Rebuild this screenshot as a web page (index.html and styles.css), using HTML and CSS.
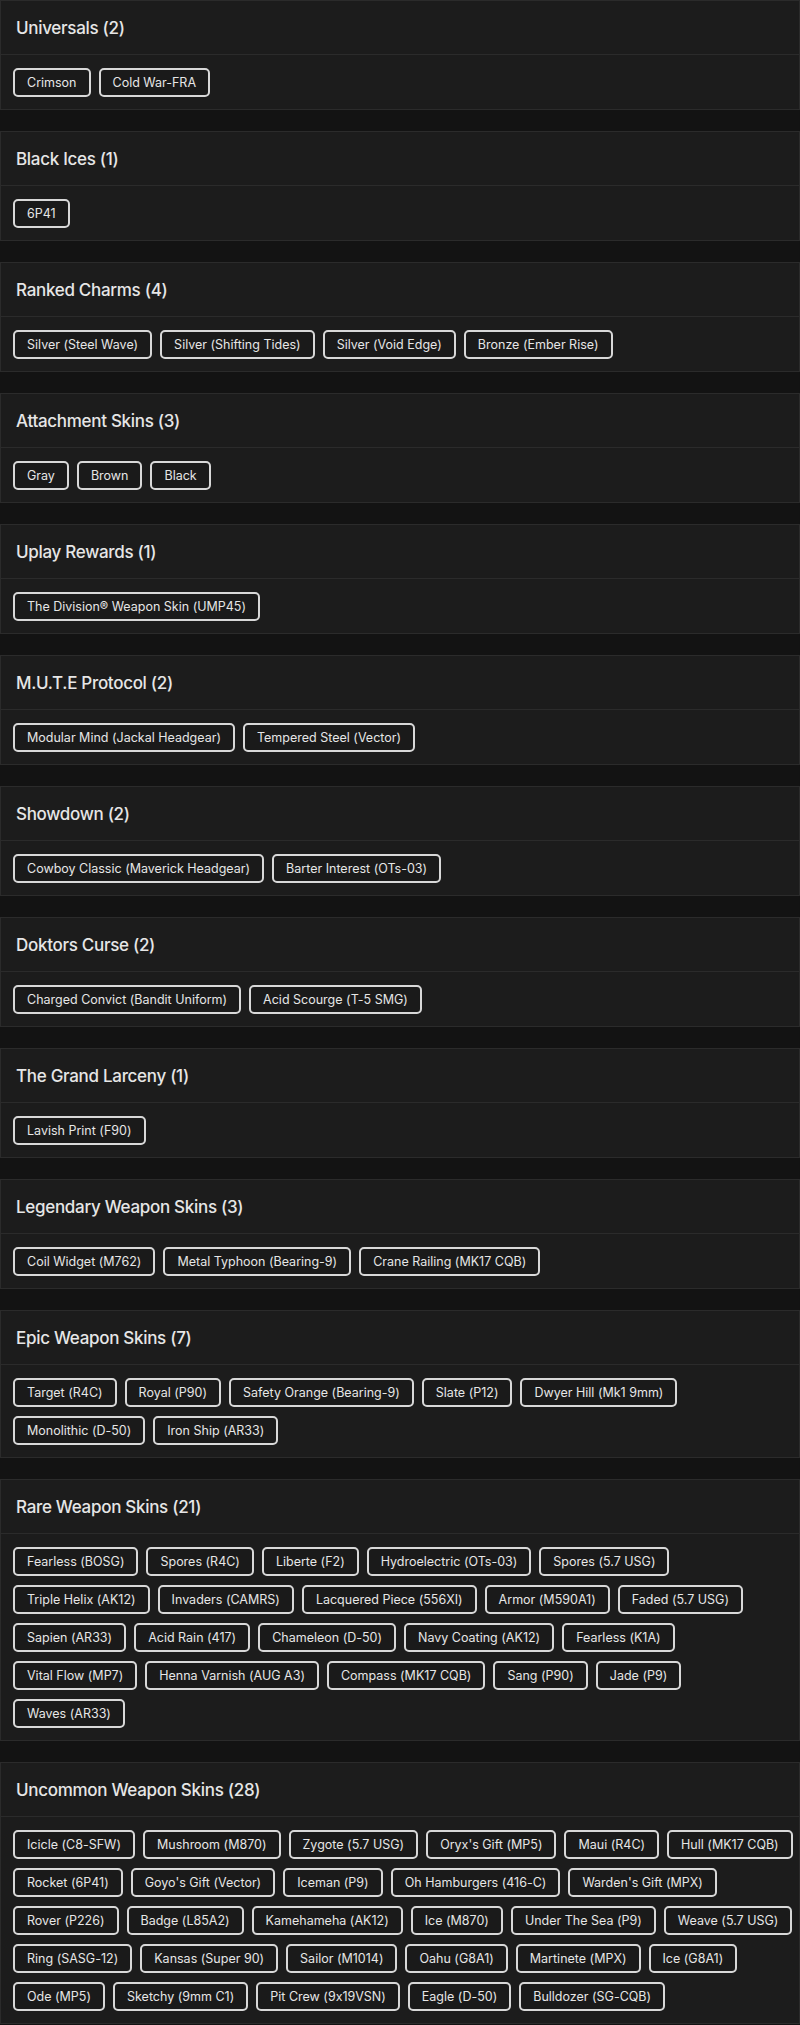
FILE: index.html
```html
<!DOCTYPE html>
<html lang="en">
<head>
    <meta charset="UTF-8">
    <meta name="viewport" content="width=device-width, initial-scale=1.0">
    <title>Skins</title>
    <link rel="stylesheet" href="styles.css">
</head>
<body>
    <div class="group">
        <div class="group-head"><h2>Universals (2)</h2></div>
        <div class="tags">
            <div class="tag-row">
                <span class="tag">Crimson</span>
                <span class="tag">Cold War-FRA</span>
            </div>
        </div>
    </div>
    <div class="group">
        <div class="group-head"><h2>Black Ices (1)</h2></div>
        <div class="tags">
            <div class="tag-row">
                <span class="tag">6P41</span>
            </div>
        </div>
    </div>
    <div class="group">
        <div class="group-head"><h2>Ranked Charms (4)</h2></div>
        <div class="tags">
            <div class="tag-row">
                <span class="tag">Silver (Steel Wave)</span>
                <span class="tag">Silver (Shifting Tides)</span>
                <span class="tag">Silver (Void Edge)</span>
                <span class="tag">Bronze (Ember Rise)</span>
            </div>
        </div>
    </div>
    <div class="group">
        <div class="group-head"><h2>Attachment Skins (3)</h2></div>
        <div class="tags">
            <div class="tag-row">
                <span class="tag">Gray</span>
                <span class="tag">Brown</span>
                <span class="tag">Black</span>
            </div>
        </div>
    </div>
    <div class="group">
        <div class="group-head"><h2>Uplay Rewards (1)</h2></div>
        <div class="tags">
            <div class="tag-row">
                <span class="tag">The Division® Weapon Skin (UMP45)</span>
            </div>
        </div>
    </div>
    <div class="group">
        <div class="group-head"><h2>M.U.T.E Protocol (2)</h2></div>
        <div class="tags">
            <div class="tag-row">
                <span class="tag">Modular Mind (Jackal Headgear)</span>
                <span class="tag">Tempered Steel (Vector)</span>
            </div>
        </div>
    </div>
    <div class="group">
        <div class="group-head"><h2>Showdown (2)</h2></div>
        <div class="tags">
            <div class="tag-row">
                <span class="tag">Cowboy Classic (Maverick Headgear)</span>
                <span class="tag">Barter Interest (OTs-03)</span>
            </div>
        </div>
    </div>
    <div class="group">
        <div class="group-head"><h2>Doktors Curse (2)</h2></div>
        <div class="tags">
            <div class="tag-row">
                <span class="tag">Charged Convict (Bandit Uniform)</span>
                <span class="tag">Acid Scourge (T-5 SMG)</span>
            </div>
        </div>
    </div>
    <div class="group">
        <div class="group-head"><h2>The Grand Larceny (1)</h2></div>
        <div class="tags">
            <div class="tag-row">
                <span class="tag">Lavish Print (F90)</span>
            </div>
        </div>
    </div>
    <div class="group">
        <div class="group-head"><h2>Legendary Weapon Skins (3)</h2></div>
        <div class="tags">
            <div class="tag-row">
                <span class="tag">Coil Widget (M762)</span>
                <span class="tag">Metal Typhoon (Bearing-9)</span>
                <span class="tag">Crane Railing (MK17 CQB)</span>
            </div>
        </div>
    </div>
    <div class="group">
        <div class="group-head"><h2>Epic Weapon Skins (7)</h2></div>
        <div class="tags">
            <div class="tag-row">
                <span class="tag">Target (R4C)</span>
                <span class="tag">Royal (P90)</span>
                <span class="tag">Safety Orange (Bearing-9)</span>
                <span class="tag">Slate (P12)</span>
                <span class="tag">Dwyer Hill (Mk1 9mm)</span>
            </div>
            <div class="tag-row">
                <span class="tag">Monolithic (D-50)</span>
                <span class="tag">Iron Ship (AR33)</span>
            </div>
        </div>
    </div>
    <div class="group">
        <div class="group-head"><h2>Rare Weapon Skins (21)</h2></div>
        <div class="tags">
            <div class="tag-row">
                <span class="tag">Fearless (BOSG)</span>
                <span class="tag">Spores (R4C)</span>
                <span class="tag">Liberte (F2)</span>
                <span class="tag">Hydroelectric (OTs-03)</span>
                <span class="tag">Spores (5.7 USG)</span>
            </div>
            <div class="tag-row">
                <span class="tag">Triple Helix (AK12)</span>
                <span class="tag">Invaders (CAMRS)</span>
                <span class="tag">Lacquered Piece (556XI)</span>
                <span class="tag">Armor (M590A1)</span>
                <span class="tag">Faded (5.7 USG)</span>
            </div>
            <div class="tag-row">
                <span class="tag">Sapien (AR33)</span>
                <span class="tag">Acid Rain (417)</span>
                <span class="tag">Chameleon (D-50)</span>
                <span class="tag">Navy Coating (AK12)</span>
                <span class="tag">Fearless (K1A)</span>
            </div>
            <div class="tag-row">
                <span class="tag">Vital Flow (MP7)</span>
                <span class="tag">Henna Varnish (AUG A3)</span>
                <span class="tag">Compass (MK17 CQB)</span>
                <span class="tag">Sang (P90)</span>
                <span class="tag">Jade (P9)</span>
            </div>
            <div class="tag-row">
                <span class="tag">Waves (AR33)</span>
            </div>
        </div>
    </div>
    <div class="group">
        <div class="group-head"><h2>Uncommon Weapon Skins (28)</h2></div>
        <div class="tags">
            <div class="tag-row">
                <span class="tag">Icicle (C8-SFW)</span>
                <span class="tag">Mushroom (M870)</span>
                <span class="tag">Zygote (5.7 USG)</span>
                <span class="tag">Oryx's Gift (MP5)</span>
                <span class="tag">Maui (R4C)</span>
                <span class="tag">Hull (MK17 CQB)</span>
            </div>
            <div class="tag-row">
                <span class="tag">Rocket (6P41)</span>
                <span class="tag">Goyo's Gift (Vector)</span>
                <span class="tag">Iceman (P9)</span>
                <span class="tag">Oh Hamburgers (416-C)</span>
                <span class="tag">Warden's Gift (MPX)</span>
            </div>
            <div class="tag-row">
                <span class="tag">Rover (P226)</span>
                <span class="tag">Badge (L85A2)</span>
                <span class="tag">Kamehameha (AK12)</span>
                <span class="tag">Ice (M870)</span>
                <span class="tag">Under The Sea (P9)</span>
                <span class="tag">Weave (5.7 USG)</span>
            </div>
            <div class="tag-row">
                <span class="tag">Ring (SASG-12)</span>
                <span class="tag">Kansas (Super 90)</span>
                <span class="tag">Sailor (M1014)</span>
                <span class="tag">Oahu (G8A1)</span>
                <span class="tag">Martinete (MPX)</span>
                <span class="tag">Ice (G8A1)</span>
            </div>
            <div class="tag-row">
                <span class="tag">Ode (MP5)</span>
                <span class="tag">Sketchy (9mm C1)</span>
                <span class="tag">Pit Crew (9x19VSN)</span>
                <span class="tag">Eagle (D-50)</span>
                <span class="tag">Bulldozer (SG-CQB)</span>
            </div>
        </div>
    </div>
</body>
</html>
```

FILE: styles.css
```css
* {
    margin: 0;
    padding: 0;
    box-sizing: border-box;
}
body {
    background-color: #131313;
    color: #e6e6e6;
    font-family: Inter, "Liberation Sans", sans-serif;
    font-feature-settings: "calt" 0;
}
.group {
    background-color: #1c1c1c;
    border: 1px solid #2b2b2b;
    margin-bottom: 21px;
}
.group-head {
    height: 54px;
    padding: 0 15px;
    display: flex;
    align-items: center;
    border-bottom: 1px solid #2b2b2b;
}
.group-head h2 {
    font-size: 17px;
    font-weight: 500;
    letter-spacing: -0.3px;
}
.tags {
    display: flex;
    flex-direction: column;
    gap: 9px;
    padding: 13px 12px 12px;
}
.tag-row {
    display: flex;
    gap: 8px;
}
.tag {
    border: 2px solid #d8d8d8;
    border-radius: 5px;
    padding: 4px 12px;
    font-size: 12.5px;
    line-height: 17px;
    white-space: nowrap;
    background-color: #1a1a1a;
}
```
